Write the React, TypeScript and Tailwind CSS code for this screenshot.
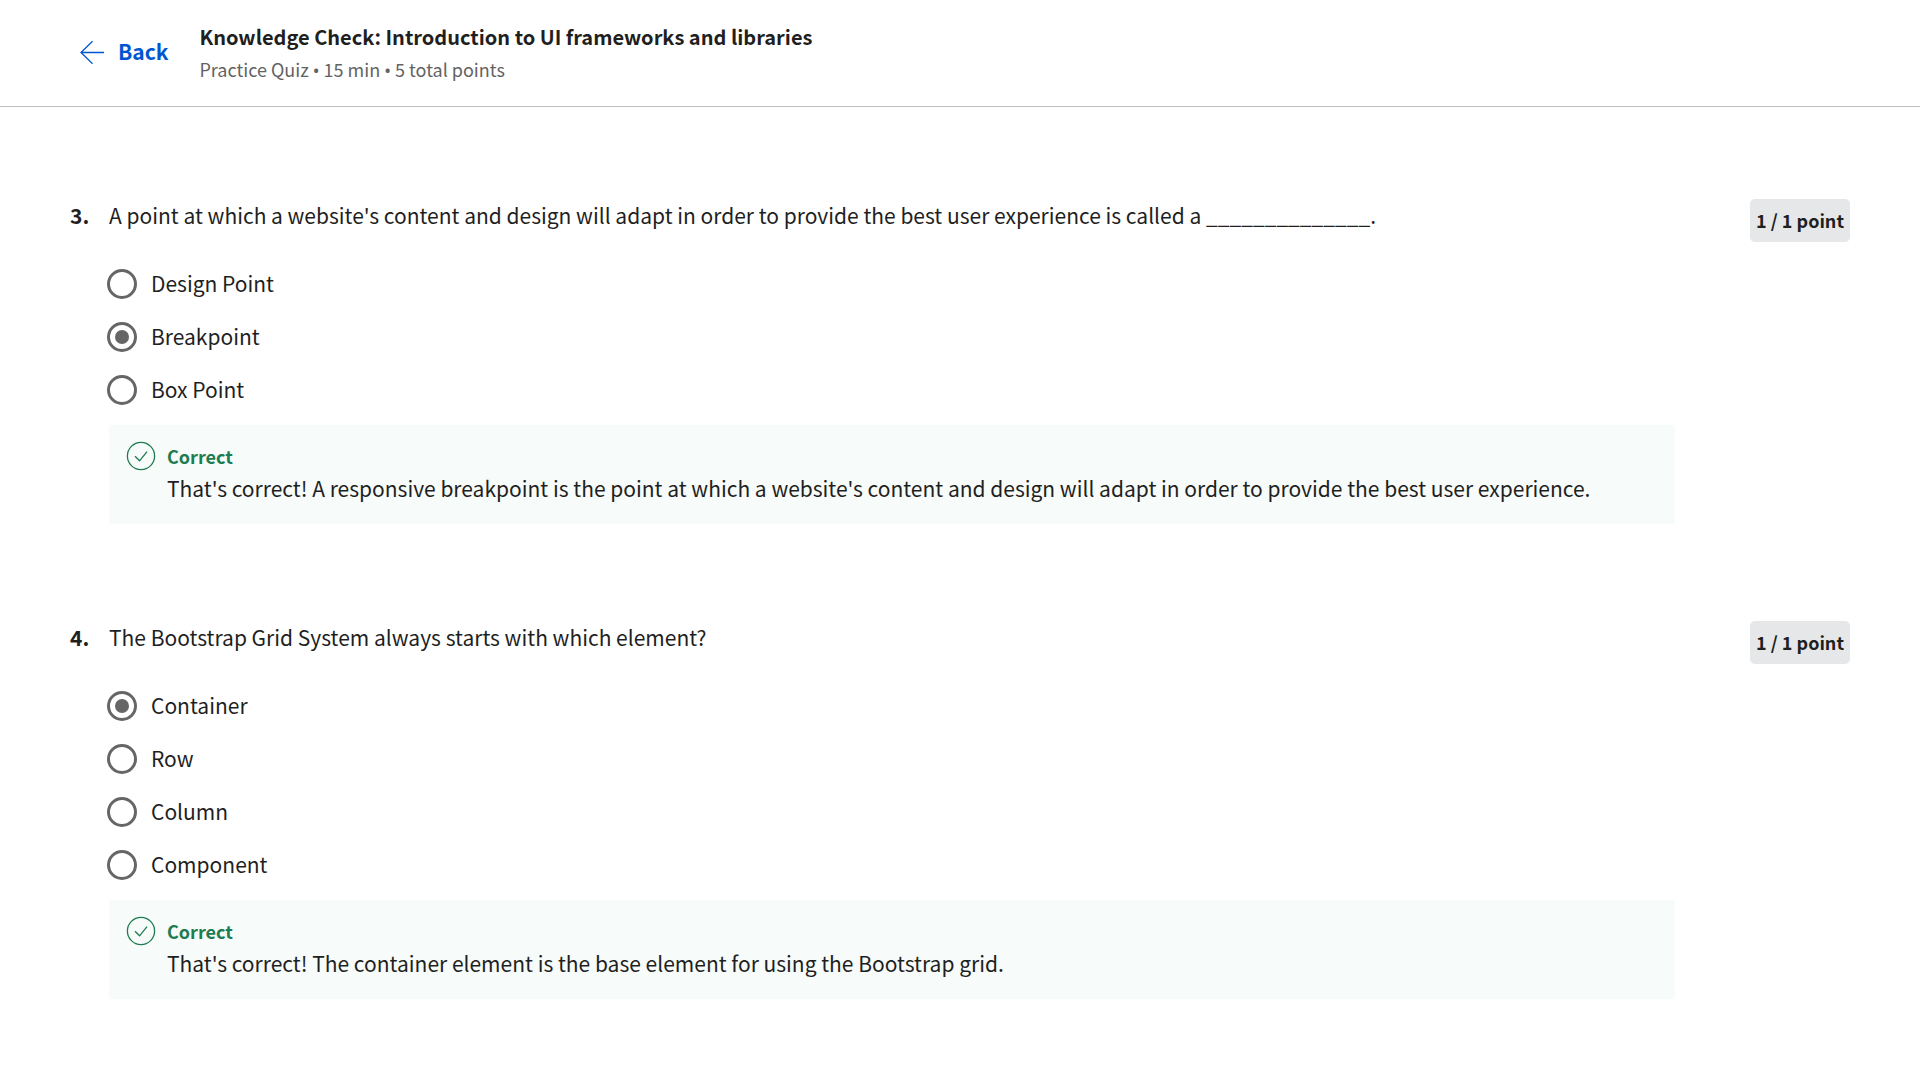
import React from "react";

type Option = { label: string; checked?: boolean };
type Question = { number: number; prompt: string; options: Option[]; feedback: string };

const questions: Question[] = [
  {
    number: 3,
    prompt:
      "A point at which a website's content and design will adapt in order to provide the best user experience is called a ______________.",
    options: [{ label: "Design Point" }, { label: "Breakpoint", checked: true }, { label: "Box Point" }],
    feedback:
      "That's correct! A responsive breakpoint is the point at which a website's content and design will adapt in order to provide the best user experience.",
  },
  {
    number: 4,
    prompt: "The Bootstrap Grid System always starts with which element?",
    options: [{ label: "Container", checked: true }, { label: "Row" }, { label: "Column" }, { label: "Component" }],
    feedback: "That's correct! The container element is the base element for using the Bootstrap grid.",
  },
];

function BackArrow() {
  return (
    <svg width="24" height="24" viewBox="0 0 24 24" fill="none" stroke="currentColor" strokeWidth="1.3" aria-hidden="true">
      <path d="M24 12.5H1M12.5 1.3L1 12.5l11.5 11.2" />
    </svg>
  );
}

function CheckCircle() {
  return (
    <svg className="shrink-0" width="30" height="30" viewBox="0 0 30 30" fill="none" stroke="currentColor" strokeWidth="1.3" aria-hidden="true">
      <circle cx="15" cy="15" r="13.6" />
      <path d="M9 15.2l4.6 4.6L21 10.6" />
    </svg>
  );
}

function Bullet() {
  return <span className="font-['Noto_Sans',sans-serif]">•</span>;
}

function QuestionBlock({ number, prompt, options, feedback }: Question) {
  return (
    <section className="flex items-start">
      <div className="w-[39px] shrink-0 text-[21px] leading-[36px] font-bold">{number}.</div>
      <fieldset className="min-w-0 flex-1">
        <legend className="text-[21px] leading-[36px]">{prompt}</legend>
        <div className="mt-6 -ml-0.5 flex flex-col items-start">
          {options.map((o) => (
            <label key={o.label} className="flex h-[53px] items-center gap-3.5 text-[21px]">
              <input
                type="radio"
                name={`question-${number}`}
                defaultChecked={o.checked}
                className="grid size-[30px] appearance-none place-content-center rounded-full border-3 border-[#666666] bg-white before:size-[14px] before:rounded-full checked:before:bg-[#666666]"
              />
              {o.label}
            </label>
          ))}
        </div>
        <div className="mt-[9px] flex gap-[11px] bg-[#f7fbf9] pt-4 pr-4 pb-[19px] pl-[17px] text-[#1d7c50]">
          <CheckCircle />
          <div>
            <p className="text-[18px] leading-[30px] font-bold">Correct</p>
            <p className="text-[21px] leading-[34px] text-[#1f1f1f]">{feedback}</p>
          </div>
        </div>
      </fieldset>
      <div className="mt-0.5 ml-[75px] rounded-[5px] bg-[#e5e7e8] px-1.5 py-1.5 text-[18px] leading-[31px] font-bold">1 / 1 point</div>
    </section>
  );
}

export default function App() {
  return (
    <div className="min-h-screen bg-white font-['Noto_Sans_CJK_SC','Noto_Sans',sans-serif] text-[#1f1f1f]">
      <header className="flex items-center border-b border-[#bdbdbd] pt-[19px] pb-[22px] pl-20">
        <button type="button" className="flex items-center gap-[14px] text-[21px] font-bold text-[#0056d2]">
          <BackArrow />
          Back
        </button>
        <div className="ml-[31px]">
          <h1 className="text-[20px] leading-[36px] font-bold">Knowledge Check: Introduction to UI frameworks and libraries</h1>
          <p className="text-[18px] leading-[28px] text-[#636363]">
            Practice Quiz <Bullet /> 15 min <Bullet /> 5 total points
          </p>
        </div>
      </header>
      <main className="flex flex-col gap-[95px] px-[70px] pt-[90px]">
        {questions.map((q) => (
          <QuestionBlock key={q.number} {...q} />
        ))}
      </main>
    </div>
  );
}
